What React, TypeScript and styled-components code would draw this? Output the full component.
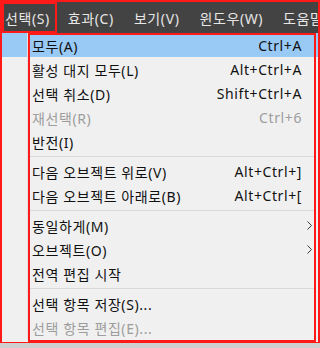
import React from "react";
import styled, { createGlobalStyle } from "styled-components";

const Global = createGlobalStyle`
  html, body { margin: 0; padding: 0; background: #cfcfcf; }
  body { width: 320px; height: 348px; overflow: hidden; }
  * { box-sizing: border-box; }
`;

const FONT = `"Noto Sans", "Noto Sans CJK KR", sans-serif`;

const Frame = styled.div`
  width: 320px;
  height: 343px;
  border: 2px solid #ff1a1a;
  border-bottom-width: 1px;
  display: flex;
  flex-direction: column;
  background: #f0f0f0;
  font-family: ${FONT};
  font-size: 14px;
  letter-spacing: 0.6px;
`;

const MenuBar = styled.div`
  height: 31px;
  background: #434343;
  display: flex;
  align-items: stretch;
  flex: none;
  overflow: hidden;
`;

const BarItem = styled.div<{ $boxed?: boolean }>`
  display: flex;
  align-items: center;
  flex: none;
  padding: 1px ${(p) => (p.$boxed ? "7px" : "10px")} 0 ${(p) => (p.$boxed ? "3px" : "10px")};
  margin-right: ${(p) => (p.$boxed ? "1px" : "0")};
  color: #e6e6e6;
  white-space: nowrap;
  ${(p) => (p.$boxed ? "outline: 2px solid #ff1a1a; outline-offset: -2px;" : "")}
`;

const Menu = styled.div`
  position: relative;
  flex: 1;
  display: flex;
  flex-direction: column;
  padding-bottom: 2px;
  background: #f0f0f0;
`;

const Row = styled.div<{ $active?: boolean; $disabled?: boolean }>`
  height: 24px;
  display: grid;
  grid-template-columns: 26px 1fr auto 16px;
  align-items: center;
  background: ${(p) => (p.$active ? "#99c9f5" : "transparent")};
  color: ${(p) => (p.$disabled ? "#9d9d9d" : "#111")};
  white-space: nowrap;
`;

const Gutter = styled.div`
  height: 100%;
  border-right: 1px solid #e2e2e2;
  box-shadow: 1px 0 0 #fcfcfc;
`;

const Label = styled.span`
  padding-left: 4px;
  padding-top: 1px;
`;

const Shortcut = styled.span`
  text-align: right;
  padding-top: 1px;
`;

const Arrow = styled.span`
  display: flex;
  align-items: center;
  padding-left: 5px;
`;

const Sep = styled.div`
  height: 6px;
  display: grid;
  grid-template-columns: 26px 1fr;
  align-items: center;
  &::after {
    content: "";
    height: 1px;
    background: #d9d9d9;
    margin-left: 2px;
    margin-right: 2px;
  }
`;

const SepGutter = styled.div`
  height: 100%;
  border-right: 1px solid #e2e2e2;
  box-shadow: 1px 0 0 #fcfcfc;
`;

const Highlight = styled.div`
  position: absolute;
  left: 26px;
  top: 0;
  right: 2px;
  bottom: 0;
  border: 2px solid #ff1a1a;
  pointer-events: none;
`;

const Chevron = () => (
  <svg width="5" height="9" viewBox="0 0 5 9">
    <path d="M0.5 0.5 L4.5 4.5 L0.5 8.5" fill="none" stroke="#3a3a3a" strokeWidth="1" />
  </svg>
);

type Item =
  | { sep: true }
  | { sep?: false; label: string; shortcut?: string; sub?: boolean; disabled?: boolean; active?: boolean };

const items: Item[] = [
  { label: "모두(A)", shortcut: "Ctrl+A", active: true },
  { label: "활성 대지 모두(L)", shortcut: "Alt+Ctrl+A" },
  { label: "선택 취소(D)", shortcut: "Shift+Ctrl+A" },
  { label: "재선택(R)", shortcut: "Ctrl+6", disabled: true },
  { label: "반전(I)" },
  { sep: true },
  { label: "다음 오브젝트 위로(V)", shortcut: "Alt+Ctrl+]" },
  { label: "다음 오브젝트 아래로(B)", shortcut: "Alt+Ctrl+[" },
  { sep: true },
  { label: "동일하게(M)", sub: true },
  { label: "오브젝트(O)", sub: true },
  { label: "전역 편집 시작" },
  { sep: true },
  { label: "선택 항목 저장(S)..." },
  { label: "선택 항목 편집(E)...", disabled: true },
];

export default function App() {
  return (
    <>
      <Global />
      <Frame>
        <MenuBar>
          <BarItem $boxed>선택(S)</BarItem>
          <BarItem>효과(C)</BarItem>
          <BarItem>보기(V)</BarItem>
          <BarItem>윈도우(W)</BarItem>
          <BarItem>도움말</BarItem>
        </MenuBar>
        <Menu>
          {items.map((it, i) =>
            it.sep ? (
              <Sep key={i}>
                <SepGutter />
              </Sep>
            ) : (
              <Row key={i} $active={it.active} $disabled={it.disabled}>
                <Gutter />
                <Label>{it.label}</Label>
                <Shortcut>{it.shortcut ?? ""}</Shortcut>
                <Arrow>{it.sub ? <Chevron /> : null}</Arrow>
              </Row>
            )
          )}
          <Highlight />
        </Menu>
      </Frame>
    </>
  );
}
